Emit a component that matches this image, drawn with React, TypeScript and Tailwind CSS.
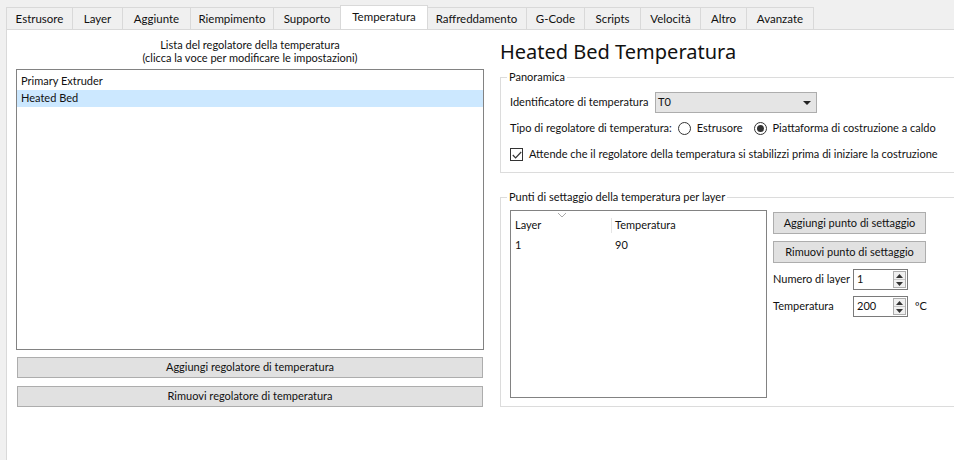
import React from "react"

const tabs = [
  { label: "Estrusore", w: "w-[67px]" },
  { label: "Layer", w: "w-[51px]" },
  { label: "Aggiunte", w: "w-[69px]" },
  { label: "Riempimento", w: "w-[84px]" },
  { label: "Supporto", w: "w-[68px]" },
  { label: "Temperatura", w: "w-[88px]", active: true },
  { label: "Raffreddamento", w: "w-[101px]" },
  { label: "G-Code", w: "w-[59px]" },
  { label: "Scripts", w: "w-[57px]" },
  { label: "Velocità", w: "w-[61px]" },
  { label: "Altro", w: "w-[47px]" },
  { label: "Avanzate", w: "w-[68px]" },
]

function Button({ label, className }: { label: string; className: string }) {
  return (
    <div className={`flex items-center justify-center border border-[#adadad] bg-[#e1e1e1] text-[#111] ${className}`}>
      {label}
    </div>
  )
}

function SpinBox({ value }: { value: string }) {
  return (
    <div className="flex h-[21px] w-[55px] items-center border border-[#7a7a7a] bg-white pl-[3px]">
      <span className="flex-1">{value}</span>
      <div className="mr-px flex h-[17px] w-[13px] flex-col border border-[#adadad] bg-[#f0f0f0]">
        <div className="flex flex-1 items-center justify-center border-b border-[#c8c8c8]">
          <svg width="7" height="4" viewBox="0 0 7 4"><path d="M0 4 L3.5 0 L7 4 Z" fill="#333" /></svg>
        </div>
        <div className="flex flex-1 items-center justify-center">
          <svg width="7" height="4" viewBox="0 0 7 4"><path d="M0 0 L3.5 4 L7 0 Z" fill="#333" /></svg>
        </div>
      </div>
    </div>
  )
}

function GroupBox({ title, className, children }: { title: string; className: string; children: React.ReactNode }) {
  return (
    <div className={`relative border border-[#dcdcdc] ${className}`}>
      <span className="absolute -top-[9px] left-[6px] bg-white px-[2px] leading-[16px]">{title}</span>
      {children}
    </div>
  )
}

export default function App() {
  return (
    <div className="flex h-[460px] w-[954px] flex-col overflow-hidden whitespace-nowrap bg-[#f0f0f0] font-['Lato',sans-serif] text-[11px] text-[#111]">
      {/* Tab bar */}
      <div className="flex items-start pl-[6px] pt-[5px] text-[11.5px]">
        {tabs.map((t) =>
          t.active ? (
            <div
              key={t.label}
              className={`relative z-10 -mx-px -mb-px flex h-[24px] items-center justify-center border border-b-0 border-[#d9d9d9] bg-white pb-[2px] ${t.w}`}
            >
              {t.label}
            </div>
          ) : (
            <div
              key={t.label}
              className={`-ml-px mt-[2px] flex h-[22px] items-center justify-center border border-b-0 border-[#d9d9d9] bg-[#f0f0f0] first:ml-0 ${t.w}`}
            >
              {t.label}
            </div>
          ),
        )}
      </div>

      {/* Tab pane */}
      <div className="ml-[6px] flex flex-1 gap-[16px] border-l border-t border-[#d9d9d9] bg-white pl-[9px] pt-[8px]">
        {/* Left column */}
        <div className="flex w-[468px] shrink-0 flex-col">
          <div className="flex flex-col items-center leading-[13px]">
            <span>Lista del regolatore della temperatura</span>
            <span>(clicca la voce per modificare le impostazioni)</span>
          </div>
          <div className="mt-[5px] flex h-[281px] flex-col border border-[#828282] bg-white pt-[3px]">
            <div className="flex h-[17px] items-center pl-[4px]">Primary Extruder</div>
            <div className="flex h-[17px] items-center bg-[#cce8ff] pl-[4px]">Heated Bed</div>
          </div>
          <Button label="Aggiungi regolatore di temperatura" className="mx-px mt-[7px] h-[21px]" />
          <Button label="Rimuovi regolatore di temperatura" className="mx-px mt-[8px] h-[21px]" />
        </div>

        {/* Right column */}
        <div className="flex w-[480px] shrink-0 flex-col">
          <div className="mt-[1px] font-['Noto_Sans',sans-serif] text-[20px] leading-[26px]">Heated Bed Temperatura</div>

          <GroupBox title="Panoramica" className="mt-[12px] h-[96px] pl-[9px] pt-[14px]">
            <div className="flex items-center">
              <span className="w-[145px]">Identificatore di temperatura</span>
              <div className="flex h-[21px] w-[162px] items-center justify-between border border-[#adadad] bg-[#e5e5e5] pl-[2px] pr-[5px]">
                <span>T0</span>
                <svg width="8" height="4" viewBox="0 0 8 4"><path d="M0 0 L4 4 L8 0 Z" fill="#222" /></svg>
              </div>
            </div>
            <div className="mt-[5px] flex h-[21px] items-center">
              <span>Tipo di regolatore di temperatura:</span>
              <div className="ml-[6px] flex items-center">
                <span className="h-[13px] w-[13px] rounded-full border border-[#333] bg-white" />
                <span className="ml-[6px]">Estrusore</span>
              </div>
              <div className="ml-[11px] flex items-center">
                <span className="flex h-[13px] w-[13px] items-center justify-center rounded-full border border-[#333] bg-white">
                  <span className="h-[7px] w-[7px] rounded-full bg-[#333]" />
                </span>
                <span className="ml-[6px]">Piattaforma di costruzione a caldo</span>
              </div>
            </div>
            <div className="mt-[5px] flex h-[21px] items-center">
              <span className="flex h-[13px] w-[13px] items-center justify-center border border-[#333] bg-white">
                <svg width="10" height="8" viewBox="0 0 10 8"><path d="M0.8 4 L3.6 6.8 L9.2 1" stroke="#333" strokeWidth="1.2" fill="none" /></svg>
              </span>
              <span className="ml-[6px]">Attende che il regolatore della temperatura si stabilizzi prima di iniziare la costruzione</span>
            </div>
          </GroupBox>

          <GroupBox title="Punti di settaggio della temperatura per layer" className="mt-[24px] h-[210px] pl-[9px] pt-[12px]">
            <div className="flex items-start">
              <div className="relative h-[188px] w-[257px] border border-[#828282] bg-white">
                <svg className="absolute left-[47px] top-[2px]" width="8" height="4" viewBox="0 0 8 4"><path d="M0 0 L4 4 L8 0" stroke="#aaa" fill="none" /></svg>
                <div className="mt-[6px] flex h-[16px] items-center">
                  <span className="w-[100px] pl-[4px]">Layer</span>
                  <span className="h-[15px] w-px bg-[#e5e5e5]" />
                  <span className="pl-[3px]">Temperatura</span>
                </div>
                <div className="mt-[4px] flex h-[16px] items-center">
                  <span className="w-[101px] pl-[4px]">1</span>
                  <span className="pl-[3px]">90</span>
                </div>
              </div>
              <div className="ml-[6px] mt-[2px] flex flex-col">
                <Button label="Aggiungi punto di settaggio" className="h-[22px] w-[153px]" />
                <Button label="Rimuovi punto di settaggio" className="mt-[7px] h-[22px] w-[153px]" />
                <div className="mt-[6px] flex items-center">
                  <span className="w-[80px]">Numero di layer</span>
                  <SpinBox value="1" />
                </div>
                <div className="mt-[6px] flex items-center">
                  <span className="w-[80px]">Temperatura</span>
                  <SpinBox value="200" />
                  <span className="ml-[7px]">ºC</span>
                </div>
              </div>
            </div>
          </GroupBox>
        </div>
      </div>
    </div>
  )
}
